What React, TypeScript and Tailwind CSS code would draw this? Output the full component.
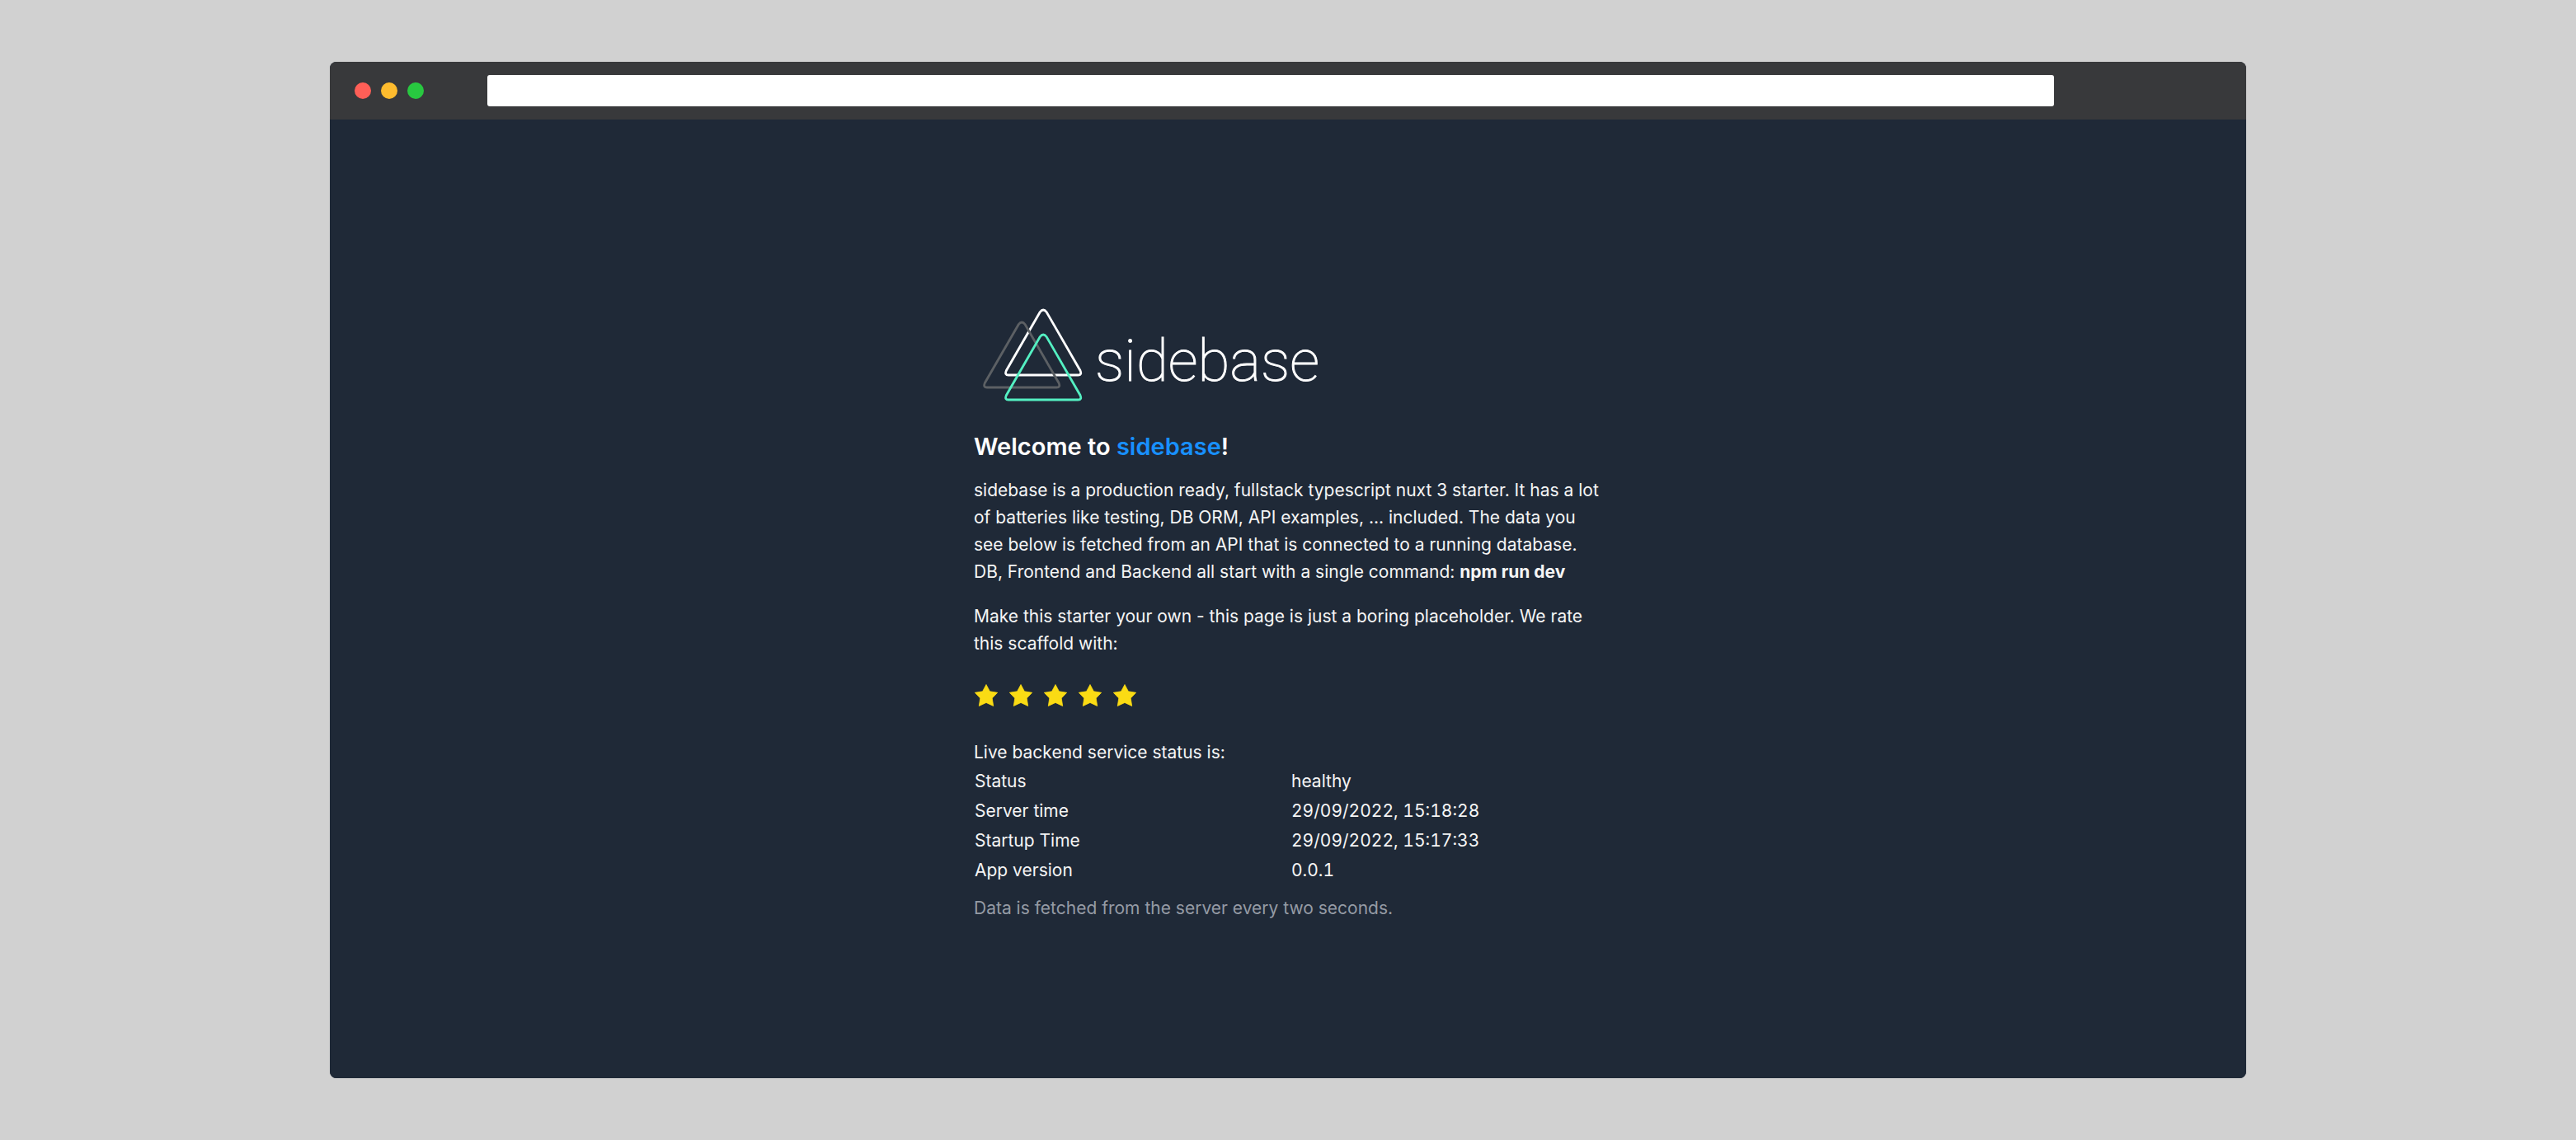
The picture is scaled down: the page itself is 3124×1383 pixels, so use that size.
import React from "react";

const rows: [string, string][] = [
  ["Status", "healthy"],
  ["Server time", "29/09/2022, 15:18:28"],
  ["Startup Time", "29/09/2022, 15:17:33"],
  ["App version", "0.0.1"],
];

const trianglePath =
  "M80.3 43.5 L39.4 114.5 Q37 120 42 120 H126.4 Q131.4 120 129 114.5 L88.1 43.5 Q84.2 38.5 80.3 43.5 Z";

function Logo() {
  return (
    <svg
      role="img"
      aria-label="sidebase"
      viewBox="0 0 440 170"
      className="mb-[13px] h-[170px] w-[440px]"
      fill="none"
      strokeWidth="2.8"
    >
      <path d={trianglePath} stroke="#ffffff" />
      <path d={trianglePath} stroke="#5c6064" transform="translate(-26 15)" />
      <path d={trianglePath} stroke="#54f0c2" transform="translate(0 30)" />
      <text
        x="147"
        y="127"
        fill="#ffffff"
        stroke="#ffffff"
        strokeWidth="1"
        className="font-['Roboto'] text-[71px] font-thin"
      >
        sidebase
      </text>
    </svg>
  );
}

function Star() {
  return (
    <svg viewBox="0 0 28 27" className="h-[27px] w-[28px]" fill="#fadb14" aria-hidden="true">
      <path d="M14 0.5 L18.4 8.8 L27.7 10.3 L21.2 17 L22.7 26.5 L14 22.4 L5.3 26.5 L6.8 17 L0.3 10.3 L9.6 8.8 Z" stroke="#fadb14" strokeWidth="0.8" strokeLinejoin="round" />
    </svg>
  );
}

export default function App() {
  return (
    <div className="flex min-h-screen flex-col bg-[#d1d1d1] px-[12.8vw] py-[75px] font-['Inter',sans-serif]">
      <div className="flex flex-1 flex-col overflow-hidden rounded-lg bg-gray-800">
        <header className="flex h-[70px] items-center bg-[#38393b] pl-[30px]">
          <div className="flex gap-3">
            <button aria-label="Close" className="size-5 rounded-full bg-[#ff5f57]" />
            <button aria-label="Minimize" className="size-5 rounded-full bg-[#febc2e]" />
            <button aria-label="Maximize" className="size-5 rounded-full bg-[#28c840]" />
          </div>
          <input
            aria-label="Address"
            className="mr-[233px] ml-[77px] h-[38px] min-w-0 flex-1 rounded-[3px] bg-white px-3 text-[20px] text-gray-800 outline-none"
          />
        </header>
        <main className="flex flex-1 items-center justify-center bg-[#1f2937]">
          <div className="w-[762px] text-[21px] leading-[33px] font-normal text-[#f5f5f5]">
            <Logo />
            <h1 className="mb-3 text-[29px] leading-[48px] font-semibold text-white">
              Welcome to <a href="#sidebase" className="text-[#1890ff]">sidebase</a>!
            </h1>
            <p className="mb-[21px]">
              sidebase is a production ready, fullstack typescript nuxt 3 starter. It has a lot
              of batteries like testing, DB ORM, API examples, ... included. The data you see
              below is fetched from an API that is connected to a running database. DB, Frontend
              and Backend all start with a single command: <b className="font-bold">npm run dev</b>
            </p>
            <p>
              Make this starter your own - this page is just a boring placeholder. We rate this
              scaffold with:
            </p>
            <div role="img" aria-label="5 stars" className="mt-[33px] mb-[39px] flex gap-[14px] pl-px">
              {[1, 2, 3, 4, 5].map((n) => (
                <Star key={n} />
              ))}
            </div>
            <table className="mb-3 w-full table-fixed">
              <caption className="text-left">Live backend service status is:</caption>
              <tbody>
                {rows.map(([label, value]) => (
                  <tr key={label} className="h-9">
                    <th scope="row" className="p-0 pl-px text-left font-normal">{label}</th>
                    <td className="p-0 pl-1 tabular-nums">{value}</td>
                  </tr>
                ))}
              </tbody>
            </table>
            <p className="text-[#959ba5]">Data is fetched from the server every two seconds.</p>
          </div>
        </main>
      </div>
    </div>
  );
}
